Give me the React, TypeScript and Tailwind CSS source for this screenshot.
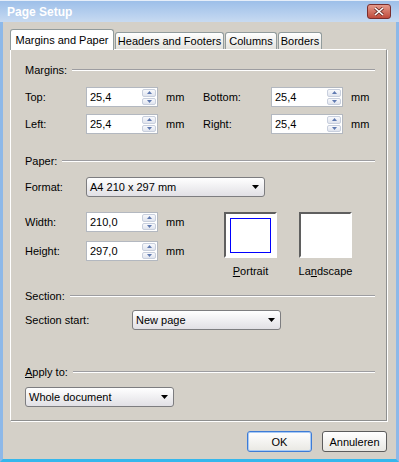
import React from "react";

function Spin() {
  return (
    <div className="flex w-[16px] flex-col gap-px p-px">
      <div className="flex flex-1 items-center justify-center rounded-[2px] border border-[#c8cfdd] bg-gradient-to-b from-[#f8f9fc] to-[#e0e4ee]">
        <svg width="5" height="3" viewBox="0 0 5 3">
          <path d="M2.5 0L5 3H0z" fill="#5f79b0" />
        </svg>
      </div>
      <div className="flex flex-1 items-center justify-center rounded-[2px] border border-[#c8cfdd] bg-gradient-to-b from-[#f8f9fc] to-[#e0e4ee]">
        <svg width="5" height="3" viewBox="0 0 5 3">
          <path d="M0 0H5L2.5 3z" fill="#5f79b0" />
        </svg>
      </div>
    </div>
  );
}

function NumberField({ value }: { value: string }) {
  return (
    <div className="flex h-[20px] w-[72px] border border-[#b3b8c0] bg-white">
      <span className="flex-1 pl-[3px] leading-[18px]">{value}</span>
      <Spin />
    </div>
  );
}

function Select({ value, width }: { value: string; width: string }) {
  return (
    <div
      className={`flex h-[20px] items-center justify-between rounded-[3px] border border-[#7d7d80] bg-gradient-to-b from-white to-[#e1e0e5] pl-[3px] pr-[5px] ${width}`}
    >
      <span>{value}</span>
      <svg width="7" height="4" viewBox="0 0 7 4">
        <path d="M0 0H7L3.5 4z" fill="#000" />
      </svg>
    </div>
  );
}

function Header({ children }: { children: React.ReactNode }) {
  return (
    <div className="flex h-[14px] items-center">
      <span>{children}</span>
      <div className="ml-[5px] h-[2px] flex-1 border-t border-b border-[#9d9da1] border-b-white" />
    </div>
  );
}

function MmRow({ label, value, labelWidth }: { label: string; value: string; labelWidth: string }) {
  return (
    <div className="flex h-[20px] items-center">
      <span className={labelWidth}>{label}</span>
      <NumberField value={value} />
      <span className="ml-[8px]">mm</span>
    </div>
  );
}

function PairRow({ a, b }: { a: [string, string]; b: [string, string] }) {
  return (
    <div className="flex">
      <div className="w-[178px]">
        <MmRow label={a[0]} value={a[1]} labelWidth="w-[61px]" />
      </div>
      <MmRow label={b[0]} value={b[1]} labelWidth="w-[68px]" />
    </div>
  );
}

function Orientation({ label, selected }: { label: React.ReactNode; selected?: boolean }) {
  return (
    <div className="flex w-[53px] flex-col items-center">
      <div className="h-[46px] w-[53px] border-2 border-t-[#5f5f5f] border-l-[#5f5f5f] border-r-white border-b-white bg-white p-[4px]">
        {selected && <div className="h-[35px] w-[41px] border border-[#0000ff]" />}
      </div>
      <span className="mt-[6px] h-[14px] whitespace-nowrap">{label}</span>
    </div>
  );
}

function Tab({ label, width, active }: { label: string; width: string; active?: boolean }) {
  return active ? (
    <div
      className={`relative z-10 -mb-px flex h-[21px] items-center justify-center rounded-t-[3px] border-x border-t border-[#919b9c] bg-white ${width}`}
    >
      {label}
    </div>
  ) : (
    <div
      className={`flex h-[17px] items-center justify-center rounded-t-[3px] border-x border-t border-[#919b9c] bg-gradient-to-b from-white to-[#e3e2dd] ${width}`}
    >
      {label}
    </div>
  );
}

function Button({ children, focused }: { children: React.ReactNode; focused?: boolean }) {
  return (
    <div
      className={`flex h-[21px] w-[65px] items-center justify-center rounded-[3px] border bg-gradient-to-b from-white to-[#e9e8e3] ${
        focused ? "border-[#3d7bd6] shadow-[inset_0_0_0_1px_#a9caf4]" : "border-[#5c5c5c]"
      }`}
    >
      {children}
    </div>
  );
}

export default function App() {
  return (
    <div className="flex h-[462px] w-[399px] flex-col bg-[#d4d0c8] font-['Liberation_Sans',Arial,sans-serif] text-[11px] leading-[14px] text-black">
      <div className="flex h-[22px] items-center justify-between border-t border-t-[#e6eef9] bg-gradient-to-b from-[#9dbfe9] to-[#c7daf1] pl-[7px] pr-[8px]">
        <span className="text-[12px] font-bold text-white">Page Setup</span>
        <div className="flex h-[15px] w-[24px] items-center justify-center rounded-[3px] border border-[#7a2d2d] bg-gradient-to-b from-[#e49a8c] to-[#bf4a3c]">
          <svg width="10" height="9" viewBox="0 0 10 9">
            <path d="M1 1L9 8M9 1L1 8" stroke="#6a2a24" strokeWidth="3" />
            <path d="M1 1L9 8M9 1L1 8" stroke="#fff" strokeWidth="1.6" />
          </svg>
        </div>
      </div>
      <div className="flex flex-1 flex-col border-x-[3px] border-b-[3px] border-[#8db8e8] border-b-[#35b7ec] pl-[7px] pr-[9px] pt-[7px]">
        <div className="flex h-[20px] items-end gap-px">
          <Tab label="Margins and Paper" width="w-[104px]" active />
          <Tab label="Headers and Footers" width="w-[109px]" />
          <Tab label="Columns" width="w-[52px]" />
          <Tab label="Borders" width="w-[44px]" />
        </div>
        <div className="flex h-[372px] flex-col border border-t-white border-l-white border-r-[#8e8f8f] border-b-[#8e8f8f] pl-[14px] pr-[11px] pt-[13px] shadow-[1px_1px_0_#fff]">
          <Header>Margins:</Header>
          <div className="mt-[10px]">
            <PairRow a={["Top:", "25,4"]} b={["Bottom:", "25,4"]} />
          </div>
          <div className="mt-[7px]">
            <PairRow a={["Left:", "25,4"]} b={["Right:", "25,4"]} />
          </div>
          <div className="mt-[20px]">
            <Header>Paper:</Header>
          </div>
          <div className="mt-[9px] flex h-[20px] items-center">
            <span className="w-[61px]">Format:</span>
            <Select value="A4 210 x 297 mm" width="w-[179px]" />
          </div>
          <div className="mt-[15px] flex">
            <div className="flex w-[199px] flex-col">
              <MmRow label="Width:" value="210,0" labelWidth="w-[61px]" />
              <div className="mt-[9px]">
                <MmRow label="Height:" value="297,0" labelWidth="w-[61px]" />
              </div>
            </div>
            <div className="flex gap-[22px]">
              <Orientation
                selected
                label={
                  <>
                    <u>P</u>ortrait
                  </>
                }
              />
              <Orientation
                label={
                  <>
                    La<u>n</u>dscape
                  </>
                }
              />
            </div>
          </div>
          <div className="mt-[11px]">
            <Header>Section:</Header>
          </div>
          <div className="mt-[7px] flex h-[20px] items-center">
            <span className="w-[107px]">Section start:</span>
            <Select value="New page" width="w-[149px]" />
          </div>
          <div className="mt-[35px]">
            <Header>
              <u>A</u>pply to:
            </Header>
          </div>
          <div className="mt-[8px]">
            <Select value="Whole document" width="w-[149px]" />
          </div>
        </div>
        <div className="mt-[10px] flex justify-end gap-[10px]">
          <Button focused>OK</Button>
          <Button>Annuleren</Button>
        </div>
      </div>
    </div>
  );
}
